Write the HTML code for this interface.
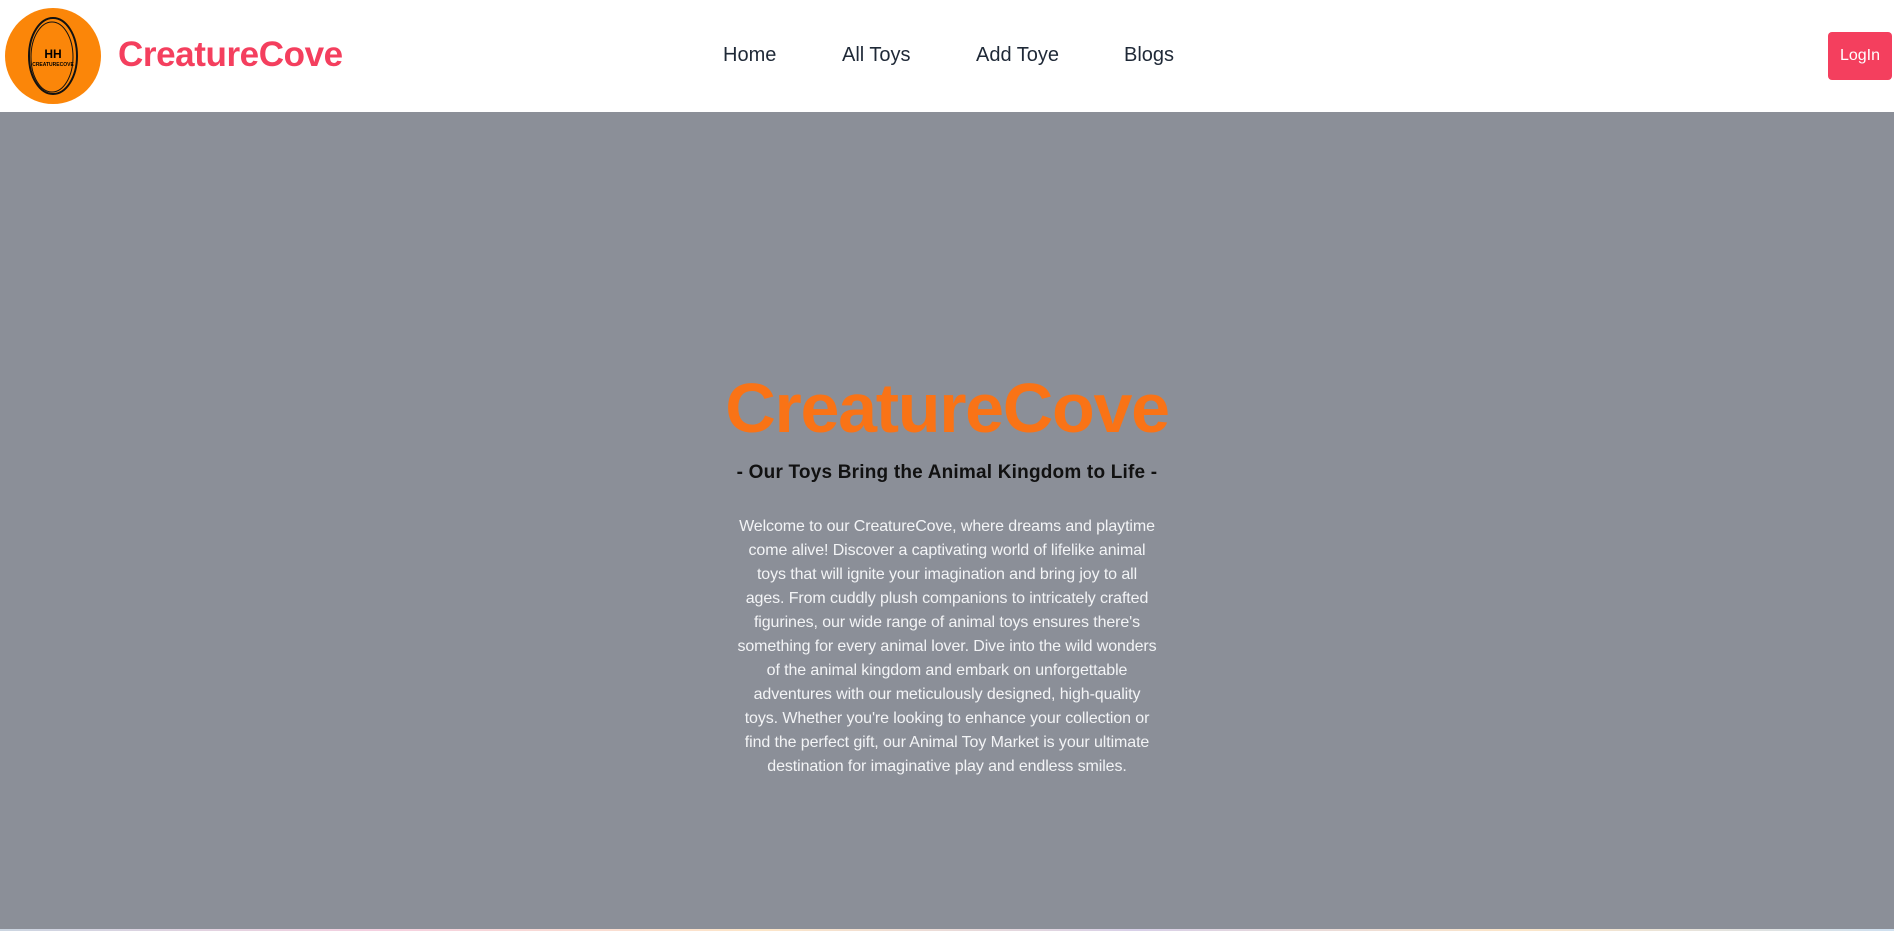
<!DOCTYPE html>
<html><head><meta charset="utf-8"><style>
*{margin:0;padding:0;box-sizing:border-box}
body{width:1894px;height:931px;overflow:hidden;font-family:"Liberation Sans",sans-serif;background:#fff;position:relative}
.hdr{position:absolute;left:0;top:0;width:1894px;height:112px;background:#fff}
.logo{position:absolute;left:5px;top:8px;width:96px;height:96px;border-radius:50%;background:#fb8609}
.brand{position:absolute;left:118px;top:35px;font-size:35px;font-weight:bold;color:#f43f5e;letter-spacing:-0.4px}
.nav a{position:absolute;top:44px;font-size:20px;color:#1f2937;text-decoration:none}
.login{position:absolute;left:1828px;top:32px;width:64px;height:48px;border-radius:4px;background:#f43f5e;color:#fff;font-size:16px;display:flex;align-items:center;justify-content:center}
.hero{position:absolute;left:0;top:112px;width:1894px;height:817px;background:#8b8f98}
.strip{position:absolute;left:0;top:929px;width:1894px;height:2px;background:linear-gradient(90deg,#cbd5e1,#f5d0e0,#fde6c8,#d8d0e8,#fde6c8,#cfe0f0)}
h1{position:absolute;left:0;width:1894px;top:368px;text-align:center;font-size:70px;font-weight:bold;color:#f97316;letter-spacing:-1.3px}
h2{position:absolute;left:0;width:1894px;top:462px;text-align:center;font-size:19px;font-weight:bold;color:#111;letter-spacing:0.2px}
p{position:absolute;left:647px;width:600px;top:515px;text-align:center;font-size:16px;line-height:24px;color:#f3f4f6;white-space:nowrap;letter-spacing:-0.1px}
</style></head><body>
<div class="hdr">
<div class="logo"><svg width="96" height="96" viewBox="0 0 96 96"><ellipse cx="48" cy="48" rx="24" ry="38" fill="none" stroke="#111" stroke-width="2"/><ellipse cx="47" cy="49" rx="21" ry="35" fill="none" stroke="#111" stroke-width="1"/><text x="48" y="50" text-anchor="middle" font-size="12" font-weight="bold" font-family="Liberation Sans">HH</text><text x="48" y="58" text-anchor="middle" font-size="5" font-weight="bold" font-family="Liberation Sans">CREATURECOVE</text></svg></div>
<div class="brand">CreatureCove</div>
<div class="nav"><a style="left:723px">Home</a><a style="left:842px">All Toys</a><a style="left:976px">Add Toye</a><a style="left:1124px">Blogs</a></div>
<div class="login">LogIn</div>
</div>
<div class="hero"></div>
<div class="strip"></div>
<h1>CreatureCove</h1>
<h2>- Our Toys Bring the Animal Kingdom to Life -</h2>
<p>Welcome to our CreatureCove, where dreams and playtime<br>come alive! Discover a captivating world of lifelike animal<br>toys that will ignite your imagination and bring joy to all<br>ages. From cuddly plush companions to intricately crafted<br>figurines, our wide range of animal toys ensures there's<br>something for every animal lover. Dive into the wild wonders<br>of the animal kingdom and embark on unforgettable<br>adventures with our meticulously designed, high-quality<br>toys. Whether you're looking to enhance your collection or<br>find the perfect gift, our Animal Toy Market is your ultimate<br>destination for imaginative play and endless smiles.</p>
</body></html>
